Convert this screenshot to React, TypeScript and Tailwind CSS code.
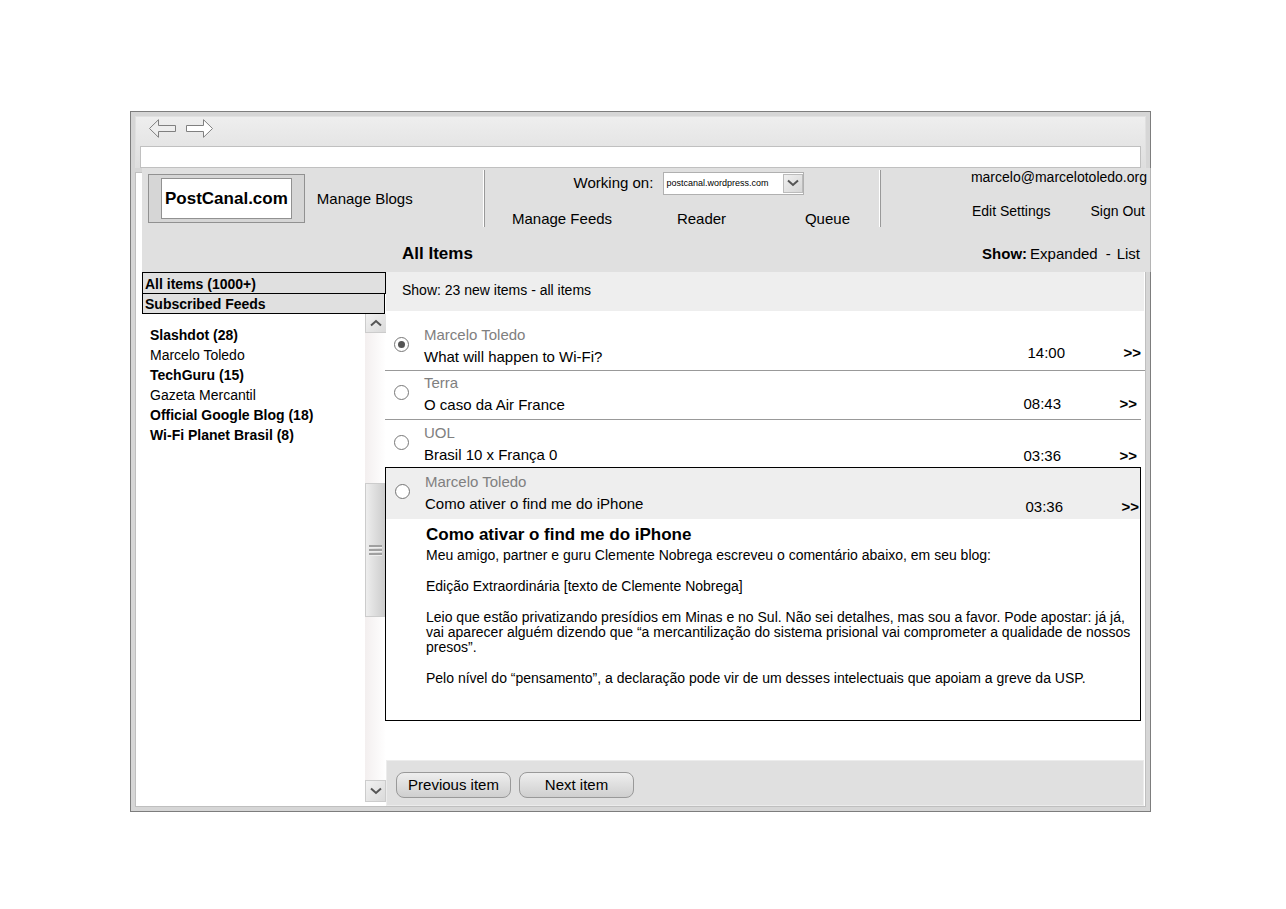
import React, { useState } from "react";

type Item = {
  id: string;
  author: string;
  title: string;
  time: string;
  row: string;
  meta: string;
};

const feeds = [
  { name: "Slashdot", unread: 28 },
  { name: "Marcelo Toledo", unread: 0 },
  { name: "TechGuru", unread: 15 },
  { name: "Gazeta Mercantil", unread: 0 },
  { name: "Official Google Blog", unread: 18 },
  { name: "Wi-Fi Planet Brasil", unread: 8 },
];

const items: Item[] = [
  { id: "wifi", author: "Marcelo Toledo", title: "What will happen to Wi-Fi?", time: "14:00", row: "h-[60px] border-b border-[#999] pt-[13px] pr-1", meta: "pb-1.5" },
  { id: "air", author: "Terra", title: "O caso da Air France", time: "08:43", row: "mr-1 h-[49px] border-b border-[#999] pt-px pr-1", meta: "pb-1" },
  { id: "uol", author: "UOL", title: "Brasil 10 x França 0", time: "03:36", row: "mr-1 h-[47px] pr-1 pt-0.5", meta: "" },
];

const openItem: Item = {
  id: "iphone",
  author: "Marcelo Toledo",
  title: "Como ativer o find me do iPhone",
  time: "03:36",
  row: "h-[51px] bg-[#eee] pt-[3px] pr-px",
  meta: "pb-px",
};

function Chevron({ up = false }: { up?: boolean }) {
  return (
    <svg width="12" height="8" viewBox="0 0 12 8" fill="none" stroke="#555" strokeWidth="2" aria-hidden="true">
      <path d={up ? "M1 6.5 6 2l5 4.5" : "M1 1.5 6 6l5-4.5"} />
    </svg>
  );
}

function ItemRow({ item, selected, onSelect }: { item: Item; selected: boolean; onSelect: (id: string) => void }) {
  return (
    <div className={`flex pl-[9px] text-[15px] leading-[22px] ${item.row}`}>
      <input
        type="radio"
        name="item"
        id={item.id}
        checked={selected}
        onChange={() => onSelect(item.id)}
        className="mt-[13px] h-[15px] w-[15px] shrink-0 appearance-none rounded-full border border-[#777] bg-white bg-clip-padding checked:bg-[#555] checked:bg-clip-content checked:p-[3px]"
      />
      <label htmlFor={item.id} className="ml-[15px] flex-1">
        <span className="block text-[#808080]">{item.author}</span>
        <span className="block">{item.title}</span>
      </label>
      <div className={`flex items-end ${item.meta}`}>
        <time className="w-[96px]">{item.time}</time>
        <a href="#open" aria-label={`Open ${item.title}`} className="font-bold">&gt;&gt;</a>
      </div>
    </div>
  );
}

export default function App() {
  const [selected, setSelected] = useState("wifi");

  return (
    <div className="min-h-screen bg-white pt-[111px] pr-[135px] pb-24 pl-[130px] font-['Liberation_Sans',Arial,sans-serif] text-black">
      <div className="border border-[#7d7d7d] bg-[#d6d6d6] pb-1">
        <div className="mx-1 mt-1 border-x border-t border-[#e0e0e0] bg-linear-to-b from-[#eee] to-[#dedede]">
          <div className="flex h-[29px] items-start gap-2 pt-0.5 pl-[13px]">
            <button type="button" aria-label="Back">
              <svg width="28" height="19" viewBox="0 0 28 19" fill="#eee" stroke="#808080">
                <path d="M.5 9.5 9.5.7v5.8h17v6h-17v5.8z" />
              </svg>
            </button>
            <button type="button" aria-label="Forward">
              <svg width="28" height="19" viewBox="0 0 28 19" fill="#fff" stroke="#808080">
                <path d="M27.5 9.5 18.5.7v5.8H1.5v6h17v5.8z" />
              </svg>
            </button>
          </div>
          <div className="px-1">
            <input aria-label="Address" className="block h-[22px] w-full border border-[#c0c0c0] bg-white px-1 text-sm" />
          </div>
        </div>

        <header className="-mr-px flex">
          <div className="mt-1 ml-1 w-[7px] shrink-0 border-t border-l border-[#bfbfbf] bg-white" />
          <div className="flex-1 border-r border-[#b4b4b4] bg-[#e0e0e0]">
            <div className="flex h-[68px] pt-0.5">
              <div className="flex w-[341px] items-start pt-1 pl-1.5">
                <div className="border border-[#919191] bg-[#d6d6d6] px-3 py-[3px]">
                  <h1 className="border border-[#919191] bg-white px-[3px] text-[17px] leading-[39px] font-bold">PostCanal.com</h1>
                </div>
                <a href="#blogs" className="mt-3.5 ml-3 text-[15px] leading-[22px]">Manage Blogs</a>
              </div>
              <div className="h-[57px] w-0.5 border-r border-l border-r-[#999] border-l-white" />
              <div className="flex-1">
                <div className="flex h-[26px] items-center justify-center pl-3.5">
                  <label htmlFor="blog" className="mr-2.5 text-[15px]">Working on:</label>
                  <div className="grid h-[23px] w-[141px] items-center border border-[#b0b0b0] bg-white">
                    <select id="blog" className="col-start-1 row-start-1 h-[21px] w-full appearance-none bg-transparent pt-0.5 pl-0.5 text-[9px]">
                      <option>postcanal.wordpress.com</option>
                    </select>
                    <span className="pointer-events-none col-start-1 row-start-1 flex h-[19px] w-5 items-center justify-center justify-self-end border border-[#bbb] bg-linear-to-br from-[#f0f0f0] to-[#d6d6d6]">
                      <Chevron />
                    </span>
                  </div>
                </div>
                <nav className="flex justify-between pt-3 pr-[29px] pl-[27px] text-[15px] leading-[22px]">
                  <a href="#feeds">Manage Feeds</a>
                  <a href="#reader" className="pl-1.5">Reader</a>
                  <a href="#queue" className="pl-5">Queue</a>
                </nav>
              </div>
              <div className="h-[57px] w-0.5 border-r border-l border-r-[#999] border-l-white" />
              <div className="flex w-[269px] flex-col items-end pr-[3px] text-sm leading-3.5">
                <span>marcelo@marcelotoledo.org</span>
                <div className="flex gap-10 pt-5 pr-0.5">
                  <a href="#settings">Edit Settings</a>
                  <a href="#signout">Sign Out</a>
                </div>
              </div>
            </div>
            <div className="flex h-9 items-center justify-between pr-[10px] pl-[260px]">
              <h2 className="text-[17px] font-bold">All Items</h2>
              <div className="flex text-[15px]">
                <span className="mr-[3px] font-bold">Show:</span>
                <a href="#expanded">Expanded</a>
                <span className="mr-1.5 ml-2">-</span>
                <a href="#list">List</a>
              </div>
            </div>
          </div>
        </header>

        <div className="mx-1 flex border-r border-b border-l border-[#bfbfbf] bg-white pl-1.5">
          <aside className="flex w-[243px] shrink-0 flex-col text-sm">
            <h3 className="-mr-px border border-black bg-[#e0e0e0] pt-0.5 pl-0.5 leading-[18px] font-bold">All items (1000+)</h3>
            <h3 className="-mt-px border border-black bg-[#e0e0e0] pt-px pl-0.5 leading-[18px] font-bold">Subscribed Feeds</h3>
            <div className="flex flex-1">
              <ul className="flex-1 pt-[11px] pl-2">
                {feeds.map((f) => (
                  <li key={f.name} className={`h-5 leading-5 ${f.unread ? "font-bold" : ""}`}>
                    <a href="#feed">{f.unread ? `${f.name} (${f.unread})` : f.name}</a>
                  </li>
                ))}
              </ul>
              <div className="-mr-px mb-1 flex w-[21px] flex-col bg-linear-to-r from-[#f3efef] to-white">
                <button type="button" aria-label="Scroll up" className="flex h-[19px] items-center justify-center border-b border-l border-[#ccc] bg-linear-to-br from-[#f2f2f2] to-[#dadada]">
                  <Chevron up />
                </button>
                <div className="h-[150px]" />
                <div className="flex h-[134px] items-center justify-center border border-[#ccc] bg-linear-to-r from-[#eee] to-[#ccc]">
                  <svg width="13" height="11" viewBox="0 0 13 11" fill="none" aria-hidden="true">
                    <path d="M0 1h13M0 5h13M0 9h13" stroke="#a0a0a0" strokeWidth="2" />
                    <path d="M0 2.5h13M0 6.5h13M0 10.5h13" stroke="#eee" />
                  </svg>
                </div>
                <div className="flex-1" />
                <button type="button" aria-label="Scroll down" className="flex h-[22px] items-center justify-center border border-[#ccc] bg-linear-to-br from-[#f2f2f2] to-[#dadada]">
                  <Chevron />
                </button>
              </div>
            </div>
          </aside>

          <main className="relative flex-1">
            <p className="mr-px ml-px h-[39px] bg-[#eee] pl-4 text-sm leading-9">Show: 23 new items - all items</p>
            {items.map((item) => (
              <ItemRow key={item.id} item={item} selected={selected === item.id} onSelect={setSelected} />
            ))}
            <div className="mr-1 border border-black bg-white">
              <ItemRow item={openItem} selected={selected === openItem.id} onSelect={setSelected} />
              <article className="h-[201px] pt-1.5 pr-2 pl-10 text-sm leading-[15px]">
                <h3 className="text-[17px] leading-5 font-bold">Como ativar o find me do iPhone</h3>
                <p className="pt-[3px]">Meu amigo, partner e guru Clemente Nobrega escreveu o comentário abaixo, em seu blog:</p>
                <p className="pt-4">Edição Extraordinária [texto de Clemente Nobrega]</p>
                <p className="pt-4">
                  Leio que estão privatizando presídios em Minas e no Sul. Não sei detalhes, mas sou a favor. Pode apostar: já já, vai
                  aparecer alguém dizendo que “a mercantilização do sistema prisional vai comprometer a qualidade de nossos presos”.
                </p>
                <p className="pt-4">Pelo nível do “pensamento”, a declaração pode vir de um desses intelectuais que apoiam a greve da USP.</p>
              </article>
            </div>
            <div className="mt-[39px] mr-px ml-px flex h-[46px] items-start gap-2 border border-[#ececec] bg-[#e0e0e0] pt-[11px] pl-[9px] text-[15px]">
              <button type="button" className="h-[26px] w-[115px] rounded-lg border border-[#999] bg-linear-to-b from-[#eee] to-[#cfcfcf] pt-px">Previous item</button>
              <button type="button" className="h-[26px] w-[115px] rounded-lg border border-[#999] bg-linear-to-b from-[#eee] to-[#cfcfcf] pt-px">Next item</button>
            </div>
          </main>
        </div>
      </div>
    </div>
  );
}
